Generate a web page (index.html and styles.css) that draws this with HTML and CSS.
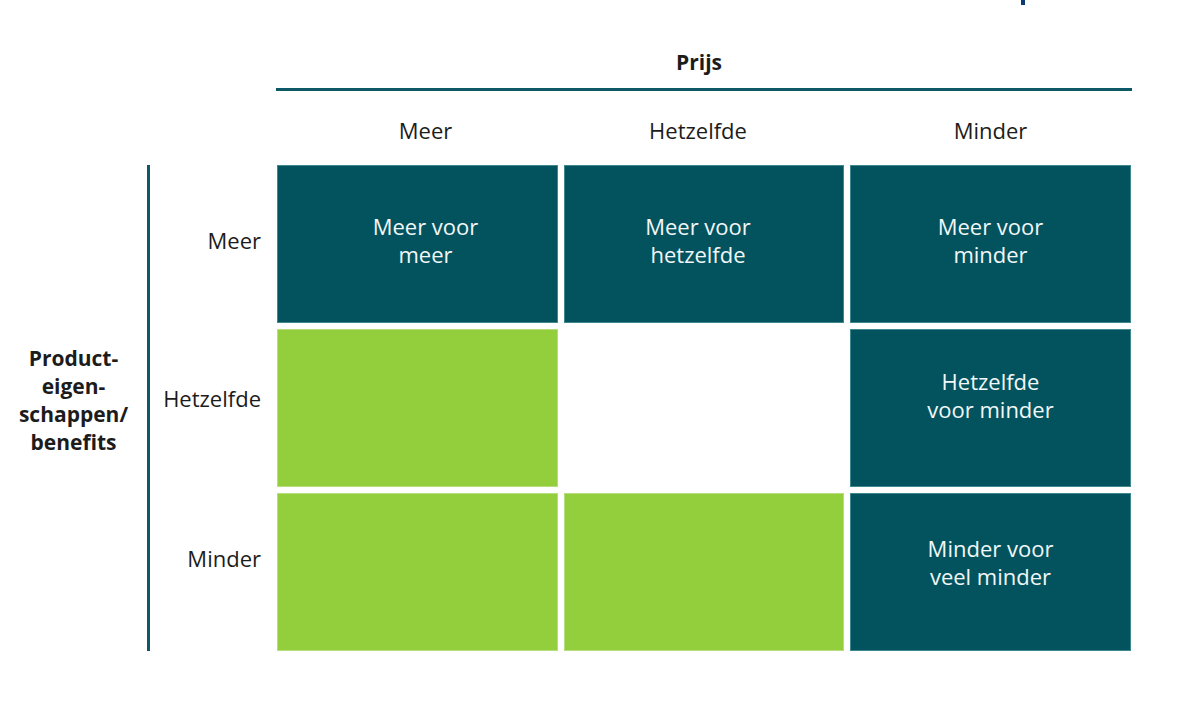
FILE: index.html
```html
<!DOCTYPE html>
<html lang="nl">
<head>
<meta charset="utf-8">
<title>Prijs / Producteigenschappen</title>
<link rel="stylesheet" href="styles.css">
</head>
<body>
<div class="page">
  <div class="mark"></div>
  <div class="head">
    <div class="title">Prijs</div>
    <div class="rule"></div>
    <div class="cols">
      <div class="col ca">Meer</div>
      <div class="col cb">Hetzelfde</div>
      <div class="col">Minder</div>
    </div>
  </div>
  <div class="body">
    <div class="side">Product-<br>eigen-<br>schappen/<br>benefits</div>
    <div class="vline"></div>
    <div class="matrix">
      <div class="label lab1">Meer</div>
      <div class="cell dark row1 ca">Meer voor<br>meer</div>
      <div class="cell dark row1 cb">Meer voor<br>hetzelfde</div>
      <div class="cell dark row1">Meer voor<br>minder</div>

      <div class="label lab2">Hetzelfde</div>
      <div class="cell green"></div>
      <div class="cell blank"></div>
      <div class="cell dark row2">Hetzelfde<br>voor minder</div>

      <div class="label lab3">Minder</div>
      <div class="cell green"></div>
      <div class="cell green"></div>
      <div class="cell dark row3">Minder voor<br>veel minder</div>
    </div>
  </div>
</div>
</body>
</html>
```

FILE: styles.css
```css
html, body {
  margin: 0;
  padding: 0;
  background: #ffffff;
}

.page {
  width: 1197px;
  height: 707px;
  overflow: hidden;
  font-family: "Open Sans", "Noto Sans", sans-serif;
  color: #1c1c1c;
}

.mark {
  margin-left: 1021px;
  width: 4px;
  height: 5px;
  background: #0c3a72;
}

.head {
  margin-left: 276px;
  width: 856px;
  padding-top: 43px;
}

.title {
  font-weight: 700;
  font-size: 21px;
  line-height: 28px;
  text-align: center;
  padding-right: 10px;
}

.rule {
  height: 3px;
  margin-top: 12px;
  background: #0d5a66;
}

.cols {
  display: grid;
  grid-template-columns: 281px 280px 281px;
  column-gap: 6px;
  margin-left: 1px;
  margin-top: 25px;
  font-size: 22px;
  line-height: 28px;
  text-align: center;
}

.ca {
  padding-left: 16px;
}

.cb {
  padding-right: 12px;
}

.body {
  display: flex;
  margin-top: 21px;
}

.side {
  width: 147px;
  display: flex;
  align-items: center;
  justify-content: center;
  text-align: center;
  font-weight: 700;
  font-size: 21px;
  line-height: 28px;
  padding-bottom: 16px;
  box-sizing: border-box;
}

.vline {
  width: 3px;
  background: #0d5a66;
}

.matrix {
  display: grid;
  grid-template-columns: 121px 281px 280px 281px;
  grid-template-rows: 158px 158px 158px;
  gap: 6px;
}

.label {
  display: flex;
  align-items: center;
  justify-content: flex-end;
  padding-right: 10px;
  font-size: 22px;
  line-height: 28px;
}

.lab1 { padding-bottom: 8px; }
.lab2 { padding-bottom: 20px; }
.lab3 { padding-bottom: 28px; }

.cell {
  display: flex;
  align-items: center;
  justify-content: center;
  text-align: center;
  font-size: 22px;
  line-height: 28px;
  color: #f2f7f7;
  box-sizing: border-box;
}

.dark {
  background: #03535f;
  box-shadow: inset 0 0 0 1px #3f8791;
}

.green {
  background: #93cf3c;
  box-shadow: inset 0 0 0 1px #b5df7c;
}

.row1 { padding-bottom: 8px; }
.row2 { padding-bottom: 26px; }
.row3 { padding-bottom: 20px; }
```
